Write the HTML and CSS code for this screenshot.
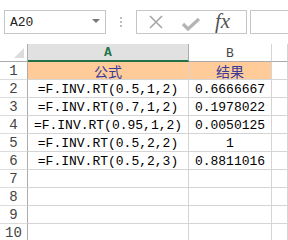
FILE: index.html
```html
<!DOCTYPE html>
<html lang="zh-CN">
<head>
  <meta charset="UTF-8">
  <title>F.INV.RT</title>
  <link rel="stylesheet" href="styles.css">
</head>
<body>
<div class="toolbar">
  <div class="name-box">
    <span class="name-text">A20</span>
    <span class="caret"></span>
  </div>
  <div class="grip">
    <span></span><span></span><span></span>
  </div>
  <div class="fx-buttons">
    <svg class="btn-icon" width="16" height="16" viewBox="0 0 16 16">
      <path d="M2 2 L14 14 M14 2 L2 14" stroke="#a6a6a6" stroke-width="1.6" fill="none"/>
    </svg>
    <svg class="btn-icon check" width="20" height="16" viewBox="0 0 20 16">
      <path d="M2 8 L7 13 L18 3" stroke="#b4b4b4" stroke-width="3.2" fill="none"/>
    </svg>
    <span class="fx">fx</span>
  </div>
  <div class="formula-input"></div>
</div>

<div class="sheet">
  <div class="cell corner"><span class="tri"></span></div>
  <div class="cell col-head selected">A</div>
  <div class="cell col-head">B</div>
  <div class="cell col-head blank"></div>

  <div class="cell row-head">1</div>
  <div class="cell title">公式</div>
  <div class="cell title">结果</div>
  <div class="cell"></div>

  <div class="cell row-head">2</div>
  <div class="cell">=F.INV.RT(0.5,1,2)</div>
  <div class="cell">0.6666667</div>
  <div class="cell"></div>

  <div class="cell row-head">3</div>
  <div class="cell">=F.INV.RT(0.7,1,2)</div>
  <div class="cell">0.1978022</div>
  <div class="cell"></div>

  <div class="cell row-head">4</div>
  <div class="cell">=F.INV.RT(0.95,1,2)</div>
  <div class="cell">0.0050125</div>
  <div class="cell"></div>

  <div class="cell row-head">5</div>
  <div class="cell">=F.INV.RT(0.5,2,2)</div>
  <div class="cell">1</div>
  <div class="cell"></div>

  <div class="cell row-head">6</div>
  <div class="cell">=F.INV.RT(0.5,2,3)</div>
  <div class="cell">0.8811016</div>
  <div class="cell"></div>

  <div class="cell row-head">7</div>
  <div class="cell"></div>
  <div class="cell"></div>
  <div class="cell"></div>

  <div class="cell row-head">8</div>
  <div class="cell"></div>
  <div class="cell"></div>
  <div class="cell"></div>

  <div class="cell row-head">9</div>
  <div class="cell"></div>
  <div class="cell"></div>
  <div class="cell"></div>

  <div class="cell row-head">10</div>
  <div class="cell"></div>
  <div class="cell"></div>
  <div class="cell"></div>
</div>
</body>
</html>
```

FILE: styles.css
```css
* {
    box-sizing: border-box;
    margin: 0;
    padding: 0;
}

body {
    width: 288px;
    height: 240px;
    overflow: hidden;
    background: #fff;
    font-family: "Liberation Mono", "DejaVu Sans Mono", monospace;
    font-size: 13px;
    color: #000;
}

/* formula bar */
.toolbar {
    height: 44px;
    padding: 10px 0 0 4px;
    display: flex;
    align-items: flex-start;
}

.name-box {
    width: 102px;
    height: 24px;
    border: 1px solid #c6c6c6;
    display: flex;
    align-items: center;
    justify-content: space-between;
    padding: 0 5px 0 5px;
}

.name-text {
    font-size: 13px;
    color: #222;
}

.caret {
    width: 0;
    height: 0;
    border-left: 4px solid transparent;
    border-right: 4px solid transparent;
    border-top: 4px solid #777;
    margin-top: -3px;
}

.grip {
    width: 30px;
    height: 24px;
    display: flex;
    flex-direction: column;
    align-items: center;
    justify-content: center;
    gap: 2px;
}

.grip span {
    width: 2px;
    height: 2px;
    background: #bdbdbd;
}

.fx-buttons {
    width: 111px;
    height: 24px;
    border: 1px solid #c6c6c6;
    display: flex;
    align-items: center;
    padding-left: 11px;
}

.btn-icon {
    display: block;
}

.btn-icon.check {
    margin-left: 17px;
    margin-top: 4px;
}

.fx {
    margin-left: 14px;
    font-family: "Liberation Serif", serif;
    font-style: italic;
    font-size: 21px;
    color: #555;
    line-height: 1;
    margin-top: -2px;
}

.formula-input {
    margin-left: 3px;
    flex: 1;
    height: 24px;
    border: 1px solid #c6c6c6;
    border-right: none;
}

/* grid */
.sheet {
    display: grid;
    grid-template-columns: 28px 161px 83px 1fr;
    grid-auto-rows: 18px;
}

.cell {
    border-right: 1px solid #d4d4d4;
    border-bottom: 1px solid #d4d4d4;
    display: flex;
    align-items: center;
    justify-content: center;
    white-space: nowrap;
    overflow: hidden;
    padding-top: 1px;
}

.corner {
    background: #fff;
    border-right: 1px solid #ababab;
    border-bottom: 1px solid #ababab;
    position: relative;
}

.tri {
    position: absolute;
    right: 3px;
    bottom: 3px;
    width: 0;
    height: 0;
    border-left: 10px solid transparent;
    border-bottom: 10px solid #dcdcdc;
}

.col-head {
    font-size: 13px;
    color: #444;
    border-bottom: 1px solid #ababab;
}

.col-head.selected {
    background: #e1e1e1;
    color: #217346;
    font-weight: bold;
    border-bottom: 2px solid #217346;
    border-right-color: #ababab;
}

.row-head {
    font-size: 14px;
    color: #444;
    border-right: 1px solid #ababab;
    border-bottom-color: #dcdcdc;
}

.title {
    background: #ffcc99;
    color: #3b3b9c;
    font-family: "Noto Sans CJK SC", sans-serif;
    font-size: 14px;
    padding-top: 0;
}
```
